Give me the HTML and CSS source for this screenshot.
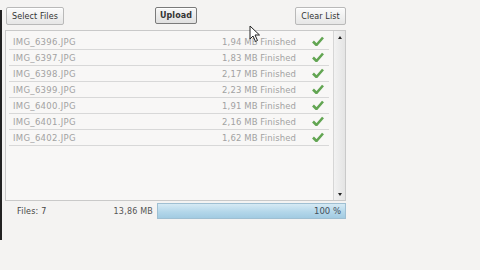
FILE: index.html
```html
<!DOCTYPE html>
<html>
<head>
<meta charset="utf-8">
<link rel="stylesheet" href="styles.css">
</head>
<body>
<div class="edge"></div>
<div class="uploader">
  <div class="toolbar">
    <button class="btn btn-select">Select Files</button>
    <button class="btn btn-upload">Upload</button>
    <button class="btn btn-clear">Clear List</button>
  </div>
  <div class="listbox">
    <ul class="rows">
      <li class="row"><span class="name">IMG_6396.JPG</span><span class="status">1,94 MB Finished</span><span class="check"><svg width="12" height="10" viewBox="0 0 12 10"><path d="M1 5.5 L4.5 9 L11 1.5" fill="none" stroke="#62a552" stroke-width="2.6" stroke-linejoin="round"/></svg></span></li>
      <li class="row"><span class="name">IMG_6397.JPG</span><span class="status">1,83 MB Finished</span><span class="check"><svg width="12" height="10" viewBox="0 0 12 10"><path d="M1 5.5 L4.5 9 L11 1.5" fill="none" stroke="#62a552" stroke-width="2.6" stroke-linejoin="round"/></svg></span></li>
      <li class="row"><span class="name">IMG_6398.JPG</span><span class="status">2,17 MB Finished</span><span class="check"><svg width="12" height="10" viewBox="0 0 12 10"><path d="M1 5.5 L4.5 9 L11 1.5" fill="none" stroke="#62a552" stroke-width="2.6" stroke-linejoin="round"/></svg></span></li>
      <li class="row"><span class="name">IMG_6399.JPG</span><span class="status">2,23 MB Finished</span><span class="check"><svg width="12" height="10" viewBox="0 0 12 10"><path d="M1 5.5 L4.5 9 L11 1.5" fill="none" stroke="#62a552" stroke-width="2.6" stroke-linejoin="round"/></svg></span></li>
      <li class="row"><span class="name">IMG_6400.JPG</span><span class="status">1,91 MB Finished</span><span class="check"><svg width="12" height="10" viewBox="0 0 12 10"><path d="M1 5.5 L4.5 9 L11 1.5" fill="none" stroke="#62a552" stroke-width="2.6" stroke-linejoin="round"/></svg></span></li>
      <li class="row"><span class="name">IMG_6401.JPG</span><span class="status">2,16 MB Finished</span><span class="check"><svg width="12" height="10" viewBox="0 0 12 10"><path d="M1 5.5 L4.5 9 L11 1.5" fill="none" stroke="#62a552" stroke-width="2.6" stroke-linejoin="round"/></svg></span></li>
      <li class="row"><span class="name">IMG_6402.JPG</span><span class="status">1,62 MB Finished</span><span class="check"><svg width="12" height="10" viewBox="0 0 12 10"><path d="M1 5.5 L4.5 9 L11 1.5" fill="none" stroke="#62a552" stroke-width="2.6" stroke-linejoin="round"/></svg></span></li>
    </ul>
    <div class="scrollbar">
      <span class="arrow arrow-up"></span>
      <span class="arrow arrow-down"></span>
    </div>
  </div>
  <div class="footer">
    <div class="totals"><span class="count">Files: 7</span><span class="total">13,86 MB</span></div>
    <div class="progress"><span class="pct">100 %</span></div>
  </div>
</div>
<svg class="cursor" width="12" height="18" viewBox="0 0 12 18"><path d="M1 1 L1 14 L4 11 L6.5 16.5 L8.5 15.5 L6 10 L10.5 10 Z" fill="#fff" stroke="#222" stroke-width="1"/></svg>
</body>
</html>
```
FILE: styles.css
```css
html, body {
  margin: 0;
  padding: 0;
  background: #f4f3f2;
  width: 480px;
  height: 270px;
  overflow: hidden;
  font-family: "DejaVu Sans", Verdana, sans-serif;
  font-size: 8px;
}
body { position: relative; }
.edge {
  position: absolute;
  left: 0;
  top: 10px;
  width: 2px;
  height: 230px;
  background: #222;
}
.uploader {
  width: 341px;
  margin-left: 5px;
  padding-top: 7px;
}
.toolbar {
  display: flex;
  align-items: flex-start;
  height: 18px;
}
.btn {
  font-family: "DejaVu Sans", Verdana, sans-serif;
  font-size: 8px;
  color: #333;
  height: 18px;
  padding: 0 3px;
  border: 1px solid #b9b9b9;
  border-radius: 2px;
  background: linear-gradient(#fbfbfb, #e6e6e6);
  box-shadow: inset 0 1px 0 #fff;
  letter-spacing: 0.1px;
}
.btn-select { margin-left: 1px; width: 58px; }
.btn-upload {
  margin-left: 91px;
  width: 42px;
  height: 17px;
  font-weight: bold;
  border-color: #7a7a7a;
  background: linear-gradient(#f6f6f6, #e0e0e0);
}
.btn-clear { margin-left: auto; width: 51px; }
.listbox {
  margin-top: 5px;
  height: 169px;
  border: 1px solid #c9c9c9;
  background: #f8f7f6;
  display: flex;
}
.rows {
  list-style: none;
  margin: 0;
  padding: 3px 4px 0 3px;
  flex: 1;
}
.row {
  display: flex;
  align-items: center;
  height: 15px;
  border-bottom: 1px solid #d8d8d8;
  color: #a2a2a2;
  font-size: 8.5px;
  letter-spacing: 0.3px;
}
.name { padding-left: 4px; flex: 1; }
.status { text-align: right; letter-spacing: 0.1px; }
.check {
  width: 12px;
  margin-left: 16px;
  margin-right: 5px;
  display: flex;
  align-items: center;
  margin-top: -1px;
}
.scrollbar {
  width: 11px;
  border-left: 1px solid #d6d6d6;
  background: linear-gradient(to right, #f2f2f2, #e4e4e4);
  display: flex;
  flex-direction: column;
  justify-content: space-between;
  align-items: center;
  padding: 5px 0 4px;
}
.arrow {
  width: 0;
  height: 0;
  border-left: 2.5px solid transparent;
  border-right: 2.5px solid transparent;
}
.arrow-up { border-bottom: 3px solid #222; }
.arrow-down { border-top: 3px solid #222; }
.footer {
  display: flex;
  margin-top: 2px;
  height: 16px;
  align-items: stretch;
}
.totals {
  width: 148px;
  display: flex;
  justify-content: space-between;
  align-items: center;
  padding-left: 12px;
  box-sizing: border-box;
  color: #444;
  letter-spacing: 0.2px;
}
.total { color: #555; }
.progress {
  flex: 1;
  margin-left: 4px;
  border: 1px solid #9fbfd2;
  background: linear-gradient(#d6eaf4, #b4d7ea 55%, #a2cbe2);
  display: flex;
  justify-content: flex-end;
  align-items: center;
  padding-right: 4px;
  color: #45505a;
  font-size: 8.5px;
}
.cursor {
  position: absolute;
  left: 249px;
  top: 25px;
}
```
